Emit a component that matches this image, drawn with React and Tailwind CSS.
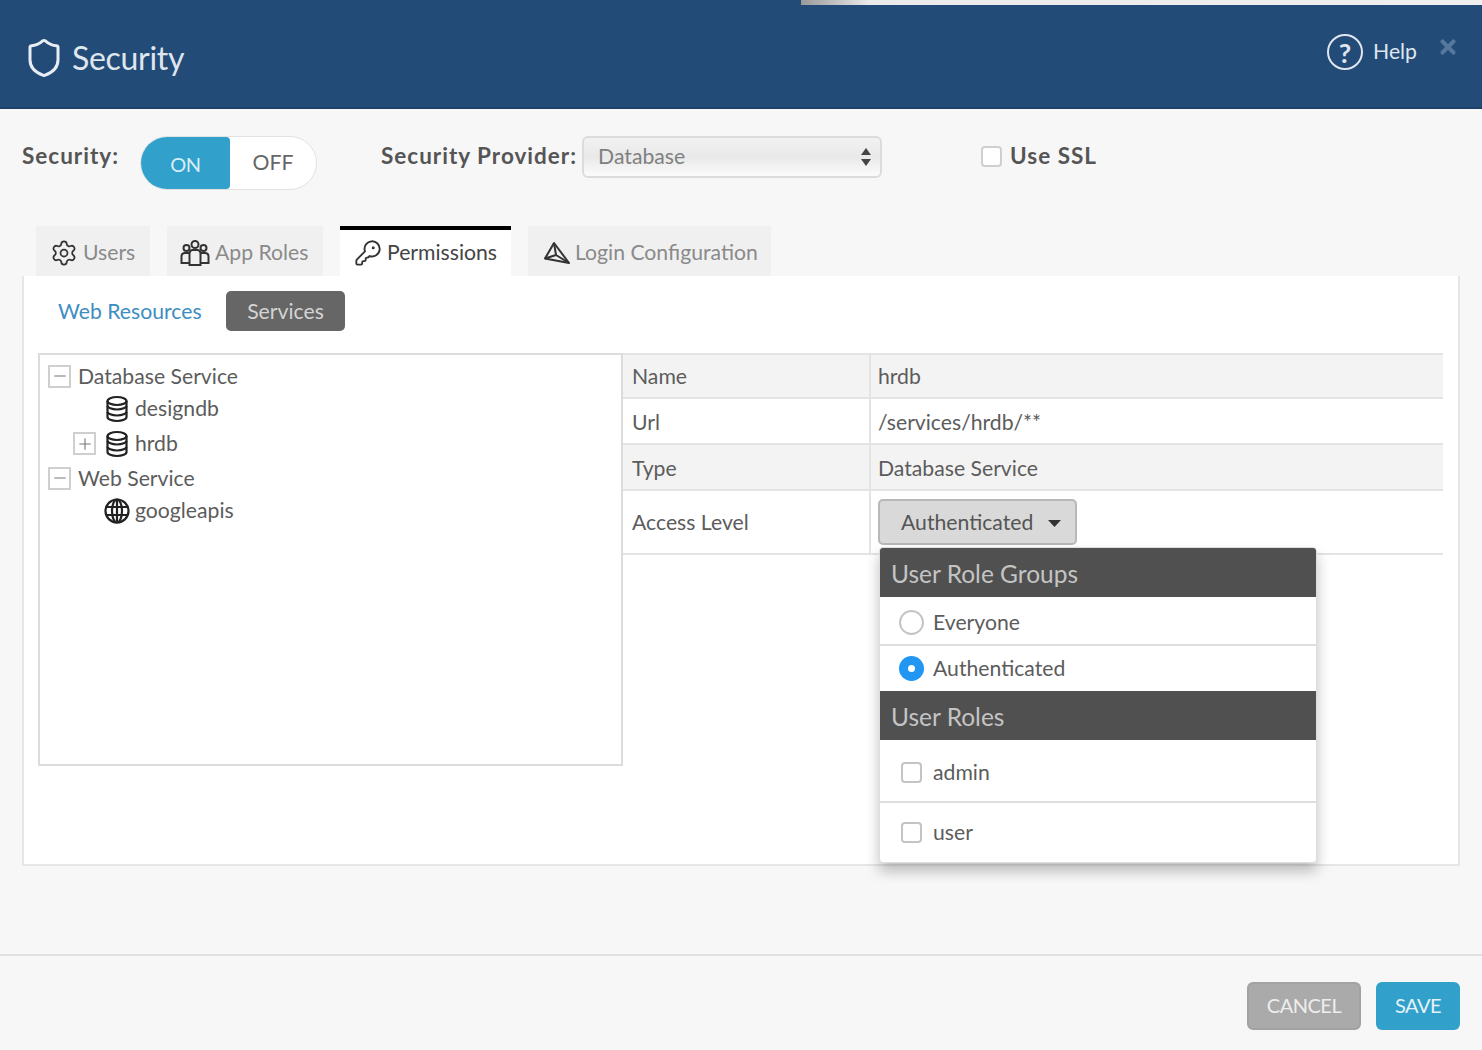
import React from "react";
import { KeyRound, Minus, Plus, Settings, Shield, X } from "lucide-react";

const AppRolesIcon = () => (
  <svg width="30" height="28" viewBox="0 0 30 28" fill="none" stroke="#333" strokeWidth="2" className="shrink-0">
    <circle cx="15" cy="5.5" r="3.5" />
    <circle cx="6.5" cy="9" r="3" />
    <circle cx="23.5" cy="9" r="3" />
    <path d="M9.5 26V14.5c0-2 1.5-3.5 3-3.5h5c1.500 0 3 1.500 3 3.500V26z" />
    <path d="M9 14H5c-2 0-3.500 1.500-3.500 3.500V24H9.500M21 14h4c2 0 3.500 1.500 3.500 3.500V24h-8" />
  </svg>
);

const LoginIcon = () => (
  <svg width="27" height="24" viewBox="0 0 27 24" fill="none" stroke="#333" strokeWidth="2" strokeLinejoin="round" className="shrink-0">
    <path d="M11 2 2 17.500l24 4.500z" />
    <path d="M2 17.500 13 14l13 8M11 2l2 12" />
  </svg>
);

const GlobeGrid = () => (
  <svg width="26" height="26" viewBox="0 0 26 26" fill="none" stroke="#222" strokeWidth="2.2" className="shrink-0">
    <circle cx="13" cy="13" r="11.500" />
    <ellipse cx="13" cy="13" rx="5" ry="11.500" />
    <path d="M13 1.500v23M2 9h22M2 17h22" />
  </svg>
);

const DbIcon = () => (
  <svg width="24" height="28" viewBox="0 0 24 28" fill="none" stroke="#222" strokeWidth="2.2" className="shrink-0">
    <ellipse cx="12" cy="6" rx="9.500" ry="4" />
    <path d="M2.500 6v4.500c0 2.200 4.300 4 9.500 4s9.500-1.800 9.500-4V6" />
    <path d="M2.500 11v5.500c0 2.200 4.300 4 9.500 4s9.500-1.800 9.500-4V11" />
    <path d="M2.500 17v5c0 2.200 4.300 4 9.500 4s9.500-1.800 9.500-4v-5" />
  </svg>
);

const TreeToggle = ({ open }) => (
  <span className="flex h-[23px] w-[23px] shrink-0 items-center justify-center border-2 border-[#cfcfcf] bg-white text-[#777]">
    {open ? <Minus size={18} strokeWidth={1.5} /> : <Plus size={18} strokeWidth={1.5} />}
  </span>
);

const Tab = ({ icon, label, active, className }) => (
  <div
    className={`flex h-full items-center gap-[5px] ${className} ${
      active ? "border-t-4 border-black bg-white text-[#444]" : "bg-[#f0f0f0] text-[#8a8a8a]"
    }`}
  >
    {icon}
    <span>{label}</span>
  </div>
);

const Row = ({ name, value, gray, first }) => (
  <div className={`flex border-b-2 border-[#e4e4e4] ${first ? "h-[44px]" : "h-[46px]"} ${gray ? "bg-[#f3f3f3]" : "bg-white"}`}>
    <div className={`flex h-full w-[248px] items-center border-r-2 border-[#e4e4e4] pl-[9px] ${first ? "pt-[2px]" : "pt-[3px]"}`}>{name}</div>
    <div className={`flex items-center pl-[7px] ${first ? "pt-[2px]" : "pt-[3px]"}`}>{value}</div>
  </div>
);

const MenuHeader = ({ children }) => (
  <div className="flex h-[49px] items-center bg-[#505050] pl-[11px] pt-[3px] text-[24.5px] text-[#c4c4c4]">{children}</div>
);

const MenuCheck = ({ label, className }) => (
  <div className={`flex items-center gap-[11px] pl-[21px] ${className}`}>
    <span className="h-[21px] w-[21px] rounded-[4px] border-2 border-[#c4c4c4] bg-white" />
    <span>{label}</span>
  </div>
);

export default function App() {
  return (
    <div className="flex h-[1050px] w-[1482px] flex-col overflow-hidden bg-[#f7f7f7] font-['Lato',sans-serif] text-[21.2px] leading-none text-[#5c5c5c]">
      {/* top strip */}
      <div className="flex h-[5px] shrink-0">
        <div className="w-[801px] bg-[#234b78]" />
        <div className="flex-1 bg-gradient-to-r from-[#9a9a9a] via-[#ebebeb] via-[10%] to-[#efefef]" />
      </div>

      {/* header */}
      <div className="flex h-[104px] shrink-0 items-center justify-between border-b-2 border-[#1d4169] bg-[#234b78] pl-[23px] pr-[23px] text-[#dfe6ee]">
        <div className="mt-[4px] flex items-center gap-[7px]">
          <Shield size={42} strokeWidth={1.7} className="text-[#e9eef4]" />
          <span className="text-[32px] tracking-[-0.3px]">Security</span>
        </div>
        <div className="mb-[8px] flex items-center">
          <span className="flex h-[36px] w-[36px] items-center justify-center rounded-full border-2 border-[#dfe6ee] text-[27px] font-bold">?</span>
          <span className="ml-[10px] text-[21.2px]">Help</span>
          <X size={22} strokeWidth={4.5} className="mb-[10px] ml-[20px] text-[#55779c]" />
        </div>
      </div>

      {/* security options */}
      <div className="flex h-[117px] shrink-0 items-start pl-[22px] pt-[27px]">
        <span className="mt-[9px] w-[118px] text-[22.5px] font-bold tracking-[1px] text-[#555]">Security:</span>
        <div className="flex h-[54px] w-[177px] overflow-hidden rounded-full border border-[#e2e2e2] bg-white">
          <div className="flex w-[89px] items-center justify-center rounded-r-[4px] bg-[#31a0cb] pt-[2px] text-[20px] tracking-[-0.5px] text-[#d8eef6]">ON</div>
          <div className="flex flex-1 items-center justify-center text-[#666]">OFF</div>
        </div>
        <span className="ml-[64px] mt-[9px] text-[22.5px] font-bold tracking-[1px] text-[#555]">Security Provider:</span>
        <div className="ml-[5px] flex h-[42px] w-[300px] items-center justify-between rounded-[6px] border-2 border-[#dcdcdc] bg-gradient-to-b from-[#f2f2f2] via-[#e9e9e9] to-[#fbfbfb] pl-[14px] pr-[8px] text-[#808080]">
          <span>Database</span>
          <svg width="12" height="20" viewBox="0 0 12 20" fill="#444">
            <path d="M6 1l5 7H1zM6 19l-5-7h10z" />
          </svg>
        </div>
        <span className="ml-[99px] mt-[10px] h-[21px] w-[21px] rounded-[4px] border-2 border-[#cfcfcf] bg-white" />
        <span className="ml-[8px] mt-[9px] text-[22.5px] font-bold tracking-[1px] text-[#555]">Use SSL</span>
      </div>

      {/* tabs */}
      <div className="flex h-[50px] shrink-0 gap-[17px] pl-[36px]">
        <Tab className="w-[114px] pl-[14px] pt-[3px]" label="Users" icon={<Settings size={28} strokeWidth={1.5} className="text-[#333]" />} />
        <Tab className="w-[156px] pl-[13px] pt-[3px]" label="App Roles" icon={<AppRolesIcon />} />
        <Tab active className="w-[171px] pl-[14px]" label="Permissions" icon={<KeyRound size={28} strokeWidth={1.6} className="text-[#333]" />} />
        <Tab className="w-[243px] pl-[15px] pt-[3px]" label="Login Configuration" icon={<LoginIcon />} />
      </div>

      {/* panel */}
      <div className="mx-[22px] h-[590px] shrink-0 border-2 border-t-0 border-[#e6e6e6] bg-white px-[14px] pt-[15px]">
        <div className="flex h-[40px] items-center pl-[20px]">
          <span className="w-[168px] pt-[1px] text-[#3d8dc1]">Web Resources</span>
          <span className="flex h-[40px] w-[119px] items-center justify-center rounded-[5px] bg-[#666] pt-[1px] text-[#d4d4d4]">Services</span>
        </div>

        <div className="mt-[22px] flex items-start">
          {/* tree */}
          <div className="h-[413px] w-[585px] shrink-0 border-2 border-[#dcdcdc] pl-[8px] pt-[9px]">
            <div className="flex h-[24px] items-center gap-[7px]">
              <TreeToggle open />
              <span className="pt-[2px]">Database Service</span>
            </div>
            <div className="mt-[7px] flex h-[27px] items-center gap-[6px] pl-[57px]">
              <DbIcon />
              <span>designdb</span>
            </div>
            <div className="mt-[8px] flex h-[27px] items-center pl-[25px]">
              <TreeToggle />
              <span className="ml-[9px]">
                <DbIcon />
              </span>
              <span className="ml-[6px]">hrdb</span>
            </div>
            <div className="mt-[9px] flex h-[24px] items-center gap-[7px]">
              <TreeToggle open />
              <span className="pt-[2px]">Web Service</span>
            </div>
            <div className="mt-[7px] flex h-[27px] items-center gap-[5px] pl-[56px]">
              <GlobeGrid />
              <span>googleapis</span>
            </div>
          </div>

          {/* details */}
          <div className="w-[820px] shrink-0 border-t-2 border-[#e4e4e4]">
            <Row first gray name="Name" value="hrdb" />
            <Row name="Url" value="/services/hrdb/**" />
            <Row gray name="Type" value="Database Service" />
            <div className="flex h-[64px] border-b-2 border-[#e4e4e4]">
              <div className="flex h-full w-[248px] items-center border-r-2 border-[#e4e4e4] pl-[9px] pt-[1px]">Access Level</div>
              <div className="relative pl-[7px] pt-[8px]">
                <div className="flex h-[46px] w-[199px] items-center gap-[15px] rounded-[5px] border-2 border-[#b8b8b8] bg-[#d9d9d9] pl-[21px] pt-[1px] text-[#555]">
                  <span>Authenticated</span>
                  <svg width="13" height="8" viewBox="0 0 13 8" fill="#333" className="mt-[3px]">
                    <path d="M0 0h13L6.500 7z" />
                  </svg>
                </div>

                {/* access level menu */}
                <div className="absolute left-[8px] top-[56px] z-10 w-[438px] overflow-hidden rounded-[4px] border border-[#dedede] bg-white shadow-[0_8px_14px_rgba(0,0,0,0.25)]">
                  <MenuHeader>User Role Groups</MenuHeader>
                  <div className="mt-[4px] flex h-[45px] items-center gap-[9px] border-b-2 border-[#dedede] pl-[19px]">
                    <span className="h-[25px] w-[25px] rounded-full border-2 border-[#c4c4c4] bg-white" />
                    <span>Everyone</span>
                  </div>
                  <div className="flex h-[45px] items-center gap-[9px] pl-[19px]">
                    <span className="flex h-[25px] w-[25px] items-center justify-center rounded-full bg-[#2196f3]">
                      <span className="h-[7px] w-[7px] rounded-full bg-white" />
                    </span>
                    <span>Authenticated</span>
                  </div>
                  <MenuHeader>User Roles</MenuHeader>
                  <div className="mt-[3px]">
                    <MenuCheck className="h-[60px] border-b-2 border-[#dedede] pt-[1px]" label="admin" />
                    <MenuCheck className="h-[59px]" label="user" />
                  </div>
                </div>
              </div>
            </div>
          </div>
        </div>
      </div>

      {/* footer */}
      <div className="mt-[88px] flex flex-1 items-start justify-end gap-[15px] border-t-2 border-[#e2e2e2] pr-[22px] pt-[26px]">
        <button className="flex h-[48px] w-[114px] items-center justify-center rounded-[6px] border-2 border-[#a2a2a2] bg-[#aaaaaa] pb-[3px] text-[20px] tracking-[-0.5px] text-[#eeeeee]">CANCEL</button>
        <button className="flex h-[48px] w-[84px] items-center justify-center rounded-[6px] bg-[#31a0cb] pb-[3px] text-[20px] tracking-[-0.5px] text-[#e4f3f9]">SAVE</button>
      </div>
    </div>
  );
}
